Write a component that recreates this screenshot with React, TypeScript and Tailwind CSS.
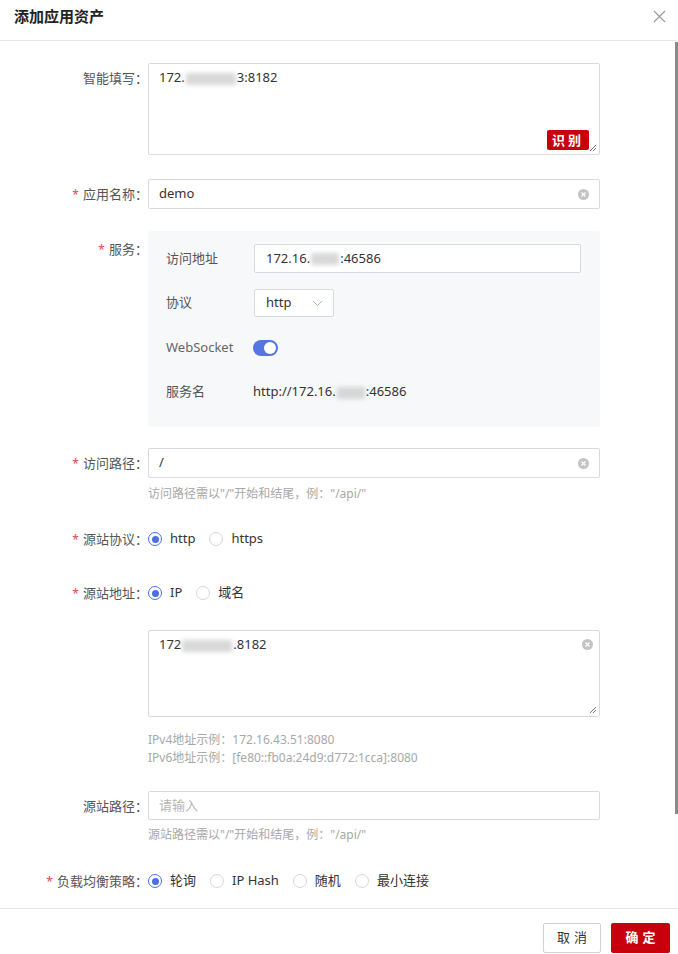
import React from 'react';

const font = "font-['Noto_Sans','Noto_Sans_CJK_SC',sans-serif]";

const Blur: React.FC<{ w: number }> = ({ w }) => (
    <span
        className="inline-block h-[12px] align-middle bg-[#c8c8c8] blur-[2px] opacity-70 mx-[1px]"
        style={{ width: w }}
    />
);

const ClearIcon: React.FC = () => (
    <span className="w-[11px] h-[11px] rounded-full bg-[#c4c4c4] flex items-center justify-center">
        <svg width="7" height="7" viewBox="0 0 7 7">
            <path d="M1.5 1.5 L5.5 5.5 M5.5 1.5 L1.5 5.5" stroke="#fff" strokeWidth="1.2" />
        </svg>
    </span>
);

const Resize: React.FC = () => (
    <svg className="absolute right-[2px] bottom-[2px]" width="9" height="9" viewBox="0 0 9 9">
        <path d="M8 2 L2 8 M8 5 L5 8" stroke="#777" strokeWidth="1" />
    </svg>
);

const Label: React.FC<{ text: string; required?: boolean }> = ({ text, required }) => (
    <div className="w-[148px] shrink-0 text-right text-[13px] text-[#555] leading-[30px]">
        {required && <span className="text-[#e0474b] mr-[4px] text-[12px]">*</span>}
        {text}：
    </div>
);

const Radio: React.FC<{ label: string; checked?: boolean }> = ({ label, checked }) => (
    <div className="flex items-center mr-[14px]">
        <span
            className={
                checked
                    ? 'w-[14px] h-[14px] rounded-full border border-[#4d6fe0] flex items-center justify-center'
                    : 'w-[14px] h-[14px] rounded-full border border-[#d4d7de] bg-white'
            }
        >
            {checked && <span className="w-[7px] h-[7px] rounded-full bg-[#4d6fe0]" />}
        </span>
        <span className="ml-[8px] text-[13px] text-[#333]">{label}</span>
    </div>
);

const Hint: React.FC<{ text: string; className?: string }> = ({ text, className }) => (
    <div className={`pl-[148px] text-[12px] text-[#a8a8a8] leading-[18px] ${className ?? ''}`}>{text}</div>
);

const App: React.FC = () => {
    return (
        <div className={`relative w-[678px] h-[954px] overflow-hidden bg-white flex flex-col ${font}`}>
            <div className="h-[41px] shrink-0 flex items-center justify-between pl-[14px] pr-[12px] border-b border-[#e8e8e8]">
                <div className="text-[15px] font-bold text-[#222] -mt-[8px]">添加应用资产</div>
                <svg className="-mt-[8px]" width="13" height="13" viewBox="0 0 13 13">
                    <path d="M1 1 L12 12 M12 1 L1 12" stroke="#999" strokeWidth="1.1" />
                </svg>
            </div>

            <div className="flex-1 overflow-hidden pr-[78px]">
                <div className="flex mt-[22px]">
                    <div className="w-[148px] shrink-0 text-right text-[13px] text-[#555] leading-[30px]">
                        智能填写：
                    </div>
                    <div className="relative flex-1 h-[92px] border border-[#d6d9e0] rounded-[2px] px-[10px] pt-[4px] text-[13px] text-[#333]">
                        172.<Blur w={50} />3:8182
                        <div className="absolute right-[10px] bottom-[4px] h-[20px] px-[5px] bg-[#c8000e] text-white text-[13px] font-bold leading-[20px] tracking-[3px] rounded-[2px]">
                            识别
                        </div>
                        <Resize />
                    </div>
                </div>

                <div className="flex mt-[24px]">
                    <Label text="应用名称" required />
                    <div className="flex-1 h-[30px] border border-[#d6d9e0] rounded-[2px] px-[10px] flex items-center justify-between text-[13px] text-[#333]">
                        <span>demo</span>
                        <ClearIcon />
                    </div>
                </div>

                <div className="flex mt-[21px]">
                    <div className="w-[148px] shrink-0 text-right text-[13px] text-[#555] leading-[36px]">
                        <span className="text-[#e0474b] mr-[4px] text-[12px]">*</span>服务：
                    </div>
                    <div className="flex-1 h-[196px] bg-[#f7f8fa] rounded-[3px] pl-[18px] pr-[19px] pt-[13px] text-[13px]">
                        <div className="flex items-center">
                            <div className="w-[88px] text-[#555]">访问地址</div>
                            <div className="flex-1 h-[29px] bg-white border border-[#d6d9e0] rounded-[2px] px-[11px] flex items-center text-[#333]">
                                172.16.<Blur w={28} />:46586
                            </div>
                        </div>
                        <div className="flex items-center mt-[16px]">
                            <div className="w-[88px] text-[#555]">协议</div>
                            <div className="w-[80px] h-[28px] bg-white border border-[#d6d9e0] rounded-[2px] pl-[11px] pr-[10px] flex items-center justify-between text-[#333]">
                                <span>http</span>
                                <svg width="11" height="7" viewBox="0 0 11 7">
                                    <path d="M1 1 L5.5 5.5 L10 1" stroke="#b5b5b5" strokeWidth="1" fill="none" />
                                </svg>
                            </div>
                        </div>
                        <div className="flex items-center mt-[17px] h-[28px]">
                            <div className="w-[87px] text-[#666]">WebSocket</div>
                            <div className="w-[25px] h-[16px] rounded-full bg-[#5575e0] flex items-center justify-end pr-[2px]">
                                <span className="w-[12px] h-[12px] rounded-full bg-white" />
                            </div>
                        </div>
                        <div className="flex items-center mt-[16px] h-[28px]">
                            <div className="w-[87px] text-[#555]">服务名</div>
                            <div className="text-[#333]">
                                http://172.16.<Blur w={28} />:46586
                            </div>
                        </div>
                    </div>
                </div>

                <div className="flex mt-[21px]">
                    <Label text="访问路径" required />
                    <div className="flex-1 h-[30px] border border-[#d6d9e0] rounded-[2px] px-[10px] flex items-center justify-between text-[13px] text-[#333]">
                        <span>/</span>
                        <ClearIcon />
                    </div>
                </div>
                <Hint text={'访问路径需以"/"开始和结尾，例："/api/"'} className="mt-[6px]" />

                <div className="flex mt-[21px] h-[30px] items-center">
                    <Label text="源站协议" required />
                    <Radio label="http" checked />
                    <Radio label="https" />
                </div>

                <div className="flex mt-[24px] h-[30px] items-center">
                    <Label text="源站地址" required />
                    <Radio label="IP" checked />
                    <Radio label="域名" />
                </div>

                <div className="flex mt-[22px]">
                    <div className="w-[148px] shrink-0" />
                    <div className="relative flex-1 h-[87px] border border-[#d6d9e0] rounded-[2px] px-[10px] pt-[4px] text-[13px] text-[#333]">
                        172<Blur w={50} />.8182
                        <span className="absolute right-[6px] top-[8px]">
                            <ClearIcon />
                        </span>
                        <Resize />
                    </div>
                </div>
                <Hint text="IPv4地址示例：172.16.43.51:8080" className="mt-[14px]" />
                <Hint text="IPv6地址示例：[fe80::fb0a:24d9:d772:1cca]:8080" />

                <div className="flex mt-[24px]">
                    <Label text="源站路径" />
                    <div className="flex-1 h-[29px] border border-[#d6d9e0] rounded-[2px] px-[10px] flex items-center text-[13px] text-[#b5b5b5]">
                        请输入
                    </div>
                </div>
                <Hint text={'源站路径需以"/"开始和结尾，例："/api/"'} className="mt-[5px]" />

                <div className="flex mt-[22px] h-[30px] items-center">
                    <Label text="负载均衡策略" required />
                    <Radio label="轮询" checked />
                    <Radio label="IP Hash" />
                    <Radio label="随机" />
                    <Radio label="最小连接" />
                </div>
            </div>

            <div className="h-[46px] shrink-0 border-t border-[#e6e6e6] flex justify-end items-start pt-[14px] pr-[8px] gap-[10px] text-[13px]">
                <div className="w-[58px] h-[30px] border border-[#d0d0d0] rounded-[2px] flex items-center justify-center tracking-[4px] text-[#333] pl-[4px]">
                    取消
                </div>
                <div className="w-[59px] h-[30px] bg-[#c8000e] rounded-[2px] flex items-center justify-center tracking-[4px] text-white font-bold pl-[4px]">
                    确定
                </div>
            </div>

            <div className="absolute right-0 top-[42px] w-[3px] h-[772px] bg-[#8a8a8a]" />
        </div>
    );
};

export default App;
